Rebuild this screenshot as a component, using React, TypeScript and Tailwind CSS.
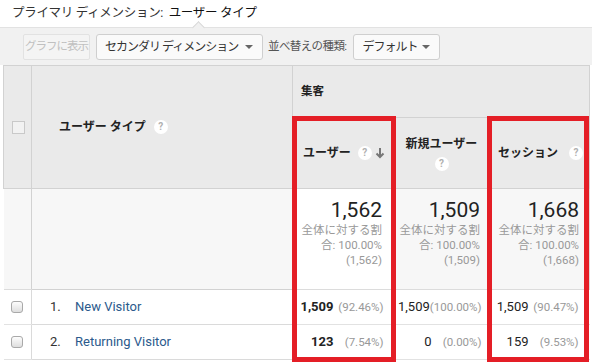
import React from 'react';

const FONT = "font-['Roboto','Noto_Sans_CJK_JP',sans-serif]";

interface Row {
  no: number;
  name: string;
  users: string;
  usersPct: string;
  newUsers: string;
  newPct: string;
  sessions: string;
  sessPct: string;
}

const ROWS: Row[] = [
  { no: 1, name: 'New Visitor', users: '1,509', usersPct: '(92.46%)', newUsers: '1,509', newPct: '(100.00%)', sessions: '1,509', sessPct: '(90.47%)' },
  { no: 2, name: 'Returning Visitor', users: '123', usersPct: '(7.54%)', newUsers: '0', newPct: '(0.00%)', sessions: '159', sessPct: '(9.53%)' },
];

const SUMMARY = ['1,562', '1,509', '1,668'];

function Help() {
  return (
    <span className="inline-flex shrink-0 items-center justify-center w-[14px] h-[14px] rounded-full bg-white text-[10px] leading-none font-bold text-[#b0b0b0]">
      ?
    </span>
  );
}

function Caret() {
  return <span className="inline-block shrink-0 w-0 h-0 border-l-[4px] border-r-[4px] border-t-[4px] border-l-transparent border-r-transparent border-t-[#666]" />;
}

function SortArrow() {
  return (
    <svg width="10" height="12" viewBox="0 0 10 12" className="shrink-0">
      <path d="M5 1v9M1.5 6.5L5 10l3.5-3.5" fill="none" stroke="#777" strokeWidth="2" />
    </svg>
  );
}

function Metric({ value, pct, bold }: { value: string; pct: string; bold?: boolean }) {
  return (
    <div className="flex justify-end items-baseline whitespace-nowrap">
      <span className={`text-[13px] text-[#222] ${bold ? 'font-bold' : ''}`}>{value}</span>
      <span className="min-w-[50px] text-right text-[11.5px] text-[#999]">{pct}</span>
    </div>
  );
}

export default function App() {
  return (
    <div className={`relative w-[592px] h-[364px] overflow-hidden bg-white ${FONT}`}>
      {/* primary dimension */}
      <div className="h-[27px] pl-3 pt-[4px] text-[12.5px] tracking-[-0.3px] text-[#333] whitespace-nowrap">
        プライマリ ディメンション:&nbsp; <span className="text-[#111]">ユーザー タイプ</span>
      </div>

      {/* toolbar */}
      <div className="relative h-[38px] bg-[#f1f1f1] border-t border-[#e2e2e2] flex items-center pl-[23px] whitespace-nowrap">
        <span className="absolute -top-[5px] left-[194px] w-[9px] h-[9px] rotate-45 bg-[#f1f1f1] border-l border-t border-[#d8d8d8]" />
        <div className="h-[26px] w-[67px] flex items-center justify-center rounded-[2px] border border-[#e2e2e2] bg-[#f4f4f4] text-[11.5px] tracking-[-1px] text-[#c0c0c0]">
          グラフに表示
        </div>
        <div className="ml-[6px] h-[26px] w-[167px] pl-[8px] pr-[9px] flex items-center justify-between rounded-[3px] border border-[#cfcfcf] bg-[#fafafa] text-[12px] tracking-[-1px] text-[#333]">
          <span>セカンダリ ディメンション</span>
          <Caret />
        </div>
        <span className="ml-[5px] text-[11.5px] tracking-[-0.6px] text-[#555]">並べ替えの種類:</span>
        <div className="ml-[7px] h-[26px] w-[87px] pl-[8px] pr-[9px] flex items-center justify-between rounded-[3px] border border-[#cfcfcf] bg-[#fafafa] text-[12px] tracking-[-1px] text-[#333]">
          <span>デフォルト</span>
          <Caret />
        </div>
      </div>

      {/* table */}
      <table className="ml-[3px] w-[586px] table-fixed border-collapse">
        <colgroup>
          <col className="w-[28px]" />
          <col className="w-[261px]" />
          <col className="w-[100px]" />
          <col className="w-[98px]" />
          <col className="w-[99px]" />
        </colgroup>
        <thead>
          <tr className="h-[52px] bg-[#eaeaea]">
            <td rowSpan={2} className="border border-[#d2d2d2] align-middle">
              <div className="ml-[8px] w-[13px] h-[13px] border border-[#c9c9c9] bg-[#f2f2f2]" />
            </td>
            <td rowSpan={2} className="border border-[#d2d2d2] pl-[27px] align-middle">
              <div className="flex items-center gap-[8px] text-[12px] font-bold text-[#222] whitespace-nowrap">
                ユーザー タイプ <Help />
              </div>
            </td>
            <th colSpan={3} className="border border-[#d2d2d2] pl-[8px] text-left text-[11.5px] font-bold text-[#222]">
              集客
            </th>
          </tr>
          <tr className="h-[71px] bg-[#eaeaea]">
            <th className="border border-[#d2d2d2] pl-[10px] pr-[7px] text-left font-bold">
              <div className="flex items-center text-[12px] text-[#222] whitespace-nowrap">
                <span>ユーザー</span>
                <span className="ml-[7px] flex"><Help /></span>
                <span className="ml-auto flex"><SortArrow /></span>
              </div>
            </th>
            <th className="border border-[#d2d2d2] font-bold">
              <div className="flex flex-col items-center gap-[4px] text-[12px] text-[#222] whitespace-nowrap">
                <span>新規ユーザー</span>
                <Help />
              </div>
            </th>
            <th className="border border-[#d2d2d2] pl-[7px] text-left font-bold">
              <div className="flex items-center gap-[11px] text-[12px] text-[#222] whitespace-nowrap">
                <span>セッション</span>
                <Help />
              </div>
            </th>
          </tr>
        </thead>
        <tbody>
          <tr className="h-[101px] bg-[#f7f7f7]">
            <td className="border-b border-[#dcdcdc]" />
            <td className="border-l border-b border-[#d2d2d2]" />
            {SUMMARY.map((v, i) => (
              <td key={i} className={`border-b border-r border-[#dcdcdc] pr-[10px] pt-[8px] align-top text-right ${i === 0 ? 'bg-white' : ''}`}>
                <div className="text-[21px] leading-[26px] text-[#222]">{v}</div>
                <div className="text-[11.5px] leading-[15px] text-[#999] whitespace-nowrap">
                  全体に対する割
                  <br />
                  合: 100.00%
                  <br />({v})
                </div>
              </td>
            ))}
          </tr>
          {ROWS.map(r => (
            <tr key={r.no} className="h-[35px] bg-white">
              <td className="border-b border-[#e2e2e2] align-middle">
                <div className="ml-[7px] w-[12px] h-[12px] rounded-[3px] border border-[#a9a9a9] bg-gradient-to-b from-[#fdfdfd] to-[#dedede]" />
              </td>
              <td className="border-l border-b border-[#dadada] pl-[18px]">
                <div className="flex items-center text-[13px]">
                  <span className="w-[25px] text-[#333]">{r.no}.</span>
                  <span className="text-[#2b5a8c]">{r.name}</span>
                </div>
              </td>
              <td className="border-b border-[#e2e2e2] pr-[9px]">
                <Metric value={r.users} pct={r.usersPct} bold />
              </td>
              <td className="border-b border-[#e2e2e2] pr-[9px]">
                <Metric value={r.newUsers} pct={r.newPct} />
              </td>
              <td className="border-b border-[#e2e2e2] pr-[11px]">
                <Metric value={r.sessions} pct={r.sessPct} />
              </td>
            </tr>
          ))}
        </tbody>
      </table>

      {/* highlight boxes */}
      <div className="absolute left-[292px] top-[116px] w-[104px] h-[246px] border-[5px] border-[#e41e26]" />
      <div className="absolute left-[487px] top-[116px] w-[102px] h-[246px] border-[5px] border-[#e41e26]" />
    </div>
  );
}
